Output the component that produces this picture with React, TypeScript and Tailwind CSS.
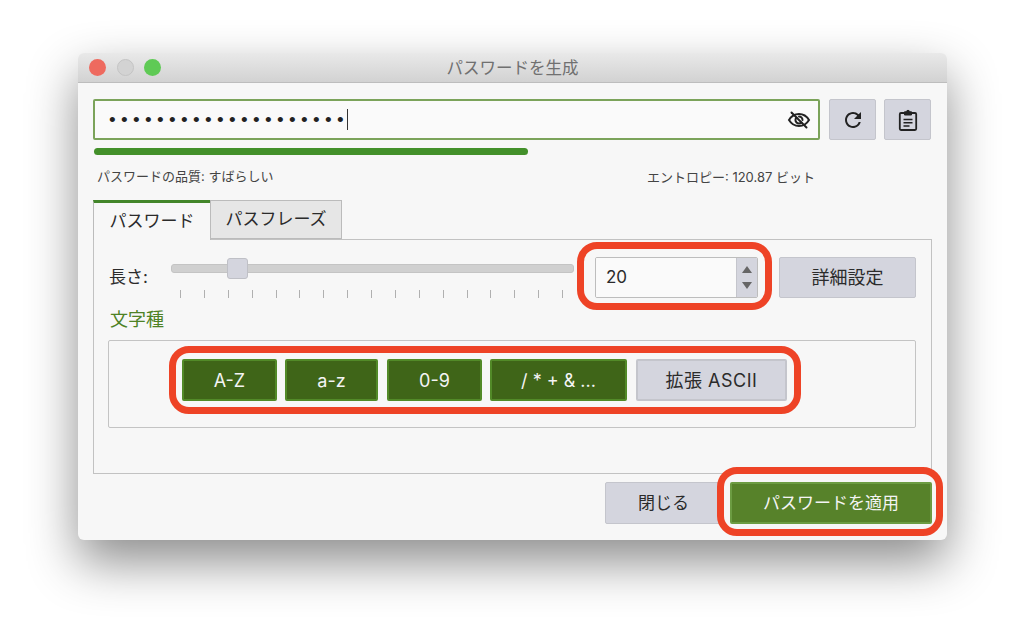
import React from 'react';
import { MdRefresh } from 'react-icons/md';

const optionButtons = [
  { label: 'A-Z', width: 'w-[95px]', on: true },
  { label: 'a-z', width: 'w-[93px] ml-[8px]', on: true },
  { label: '0-9', width: 'w-[95px] ml-[9px]', on: true },
  { label: '/ * + & ...', width: 'w-[137px] ml-[8px]', on: true },
  { label: '拡張 ASCII', width: 'w-[151px] ml-[9px]', on: false },
];

const EyeOffIcon = () => (
  <svg width="24" height="24" viewBox="0 0 24 24" fill="none" stroke="#222" strokeWidth="2" strokeLinecap="round">
    <path d="M2 12c2.400-4 5.900-6 10-6s7.600 2 10 6c-2.400 4-5.900 6-10 6s-7.600-2-10-6z" />
    <path d="M9.500 9.500a3.500 3.500 0 0 0 5 5" />
    <path d="M12 8.500a3.500 3.500 0 0 1 3.500 3.500" />
    <path d="M4.500 4.500l15 15" />
  </svg>
);

const ClipboardIcon = () => (
  <svg width="24" height="24" viewBox="0 0 24 24" fill="none" stroke="#222" strokeWidth="1.800">
    <path d="M8.500 5H5a1.200 1.200 0 0 0-1.200 1.200v14.600A1.200 1.200 0 0 0 5 22h14a1.200 1.200 0 0 0 1.200-1.200V6.200A1.200 1.200 0 0 0 19 5h-3.500" />
    <path d="M8.500 3.800h2a1.500 1.500 0 0 1 3 0h2v3.200h-7z" fill="#222" strokeWidth="1" />
    <path d="M7.500 11.500h9M7.500 14.800h9M7.500 18h6" strokeWidth="1.600" />
  </svg>
);

export default function App() {
  return (
    <div className="relative w-[1024px] h-[642px] overflow-hidden bg-white pl-[78px] pt-[53px] font-['Inter','Noto_Sans_CJK_JP',sans-serif] text-[#2b2b2b]">
      {/* window */}
      <div className="w-[869px] h-[487px] rounded-[6px] bg-[#f7f7f7] shadow-[0_22px_50px_rgba(0,0,0,0.45)] flex flex-col">
        <div className="relative h-[30px] shrink-0 rounded-t-[6px] border-b border-[#bdbdbd] bg-gradient-to-b from-[#e9e9e9] to-[#d2d2d2] flex items-center justify-center">
          <div className="absolute left-[11px] top-[6px] flex gap-[10.5px]">
            <span className="w-[17px] h-[17px] rounded-full bg-[#ee6a5f]"></span>
            <span className="w-[17px] h-[17px] rounded-full bg-[#d3d3d3] border border-[#c4c4c4]"></span>
            <span className="w-[17px] h-[17px] rounded-full bg-[#5fca55]"></span>
          </div>
          <span className="pt-[1px] text-[16.500px] text-[#707070]">パスワードを生成</span>
        </div>

        <div className="px-[15px] pt-[16px] flex flex-col">
          {/* password row */}
          <div className="flex h-[41px]">
            <div className="w-[727px] flex items-center border-2 border-[#7ba35a] rounded-[2px] bg-[#fafafa] pl-[14px] pr-[7px]">
              <span className="text-[19px] leading-none tracking-[5.350px] text-[#222] font-['Liberation_Sans',sans-serif]">••••••••••••••••••••</span>
              <span className="w-px h-[21px] bg-[#333] -ml-[2px]"></span>
              <span className="ml-auto flex"><EyeOffIcon /></span>
            </div>
            <button className="ml-[9px] w-[47px] flex items-center justify-center rounded-[2px] border border-[#c4c5cc] bg-[#d4d5de]">
              <MdRefresh size={24} color="#222" />
            </button>
            <button className="ml-[8px] w-[47px] flex items-center justify-center rounded-[2px] border border-[#c4c5cc] bg-[#d4d5de]">
              <ClipboardIcon />
            </button>
          </div>

          <div className="mt-[8px] ml-px w-[434px] h-[7px] rounded-full bg-[#43902a]"></div>

          <div className="mt-[13px] h-[16px] flex text-[13px] leading-[16px] text-[#444]">
            <span className="w-[554px] pl-[4px]">パスワードの品質: すばらしい</span>
            <span className="mt-[1px]">エントロピー: 120.87 ビット</span>
          </div>

          {/* tabs */}
          <div className="mt-[16px] h-[40px] -mb-px flex text-[17px] relative z-10">
            <div className="w-[118px] h-[40px] border-l border-r border-[#bbbbbb] border-t-[3px] border-t-[#43862a] bg-[#f7f7f7] flex items-center justify-center">パスワード</div>
            <div className="w-[132px] h-[39px] -ml-px border border-[#bbbbbb] bg-[#e6e6e6] flex items-center justify-center">パスフレーズ</div>
          </div>

          <div className="h-[235px] border border-[#c2c2c2] pl-[14px] pt-[17px]">
            <div className="flex h-[41px] pl-px">
              <span className="w-[62px] self-center text-[17px] mt-[1px]">長さ:</span>
              <div className="relative w-[403px] pt-[7px]">
                <div className="h-[9px] rounded-[3px] bg-[#d0d0d0] border border-[#c4c4c4]"></div>
                <div className="absolute left-[56px] top-[1px] w-[21px] h-[21px] rounded-[3px] bg-[#d4d5de] border border-[#bfc0c6]"></div>
                <div className="mt-[17px] pl-[9px] pr-[11px] flex justify-between">
                  {Array.from({ length: 17 }).map((_, i) => (
                    <span key={i} className="w-px h-[8px] bg-[#b0b0b0]"></span>
                  ))}
                </div>
              </div>
              <div className="ml-[21px] w-[163px] flex rounded-[2px] border border-[#bdbdbd] overflow-hidden">
                <div className="flex-1 bg-[#fafafa] pl-[10px] flex items-center text-[17px]">20</div>
                <div className="w-[21px] bg-[#d4d5de] border-l border-[#c4c5cc] flex flex-col items-center justify-center gap-[9px]">
                  <svg width="10" height="7" viewBox="0 0 10 7"><path d="M5 0L10 7H0z" fill="#666" /></svg>
                  <svg width="10" height="7" viewBox="0 0 10 7"><path d="M0 0h10L5 7z" fill="#666" /></svg>
                </div>
              </div>
              <button className="ml-[21px] w-[137px] rounded-[2px] border border-[#c4c5cc] bg-[#d4d5de] text-[18px]">詳細設定</button>
            </div>

            <div className="mt-[13px] pl-[2px] h-[17px] leading-[17px] text-[18px] text-[#4e8224]">文字種</div>

            <div className="mt-[12px] w-[808px] h-[88px] border border-[#c4c4c4] rounded-[2px] pl-[73px] pt-[18px]">
              <div className="flex h-[42px]">
                {optionButtons.map((b) => (
                  <button
                    key={b.label}
                    className={
                      b.on
                        ? `${b.width} pt-[1px] rounded-[2px] border-2 border-[#528a28] bg-[#3f6518] text-[18px] text-[#f4f4f4]`
                        : `${b.width} pt-[1px] rounded-[2px] border-2 border-[#c4c5cc] bg-[#d4d5de] text-[18px] tracking-[0.500px]`
                    }
                  >
                    {b.label}
                  </button>
                ))}
              </div>
            </div>
          </div>

          {/* footer buttons */}
          <div className="mt-[8px] h-[42px] flex justify-end gap-[8px]">
            <button className="w-[117px] pt-[2px] rounded-[2px] border border-[#c4c5cc] bg-[#d4d5de] text-[17px]">閉じる</button>
            <button className="w-[202px] pt-[2px] rounded-[2px] border-2 border-[#6c9c42] bg-[#57822a] text-[17px] text-[#f4f4f4]">パスワードを適用</button>
          </div>
        </div>
      </div>

      {/* red annotation outlines */}
      <div className="absolute left-[577px] top-[242px] w-[195px] h-[68px] rounded-[20px] border-[7px] border-[#ee4326]"></div>
      <div className="absolute left-[169px] top-[346px] w-[632px] h-[68px] rounded-[20px] border-[7px] border-[#ee4326]"></div>
      <div className="absolute left-[717px] top-[467px] w-[226px] h-[69px] rounded-[20px] border-[7px] border-[#ee4326]"></div>
    </div>
  );
}
